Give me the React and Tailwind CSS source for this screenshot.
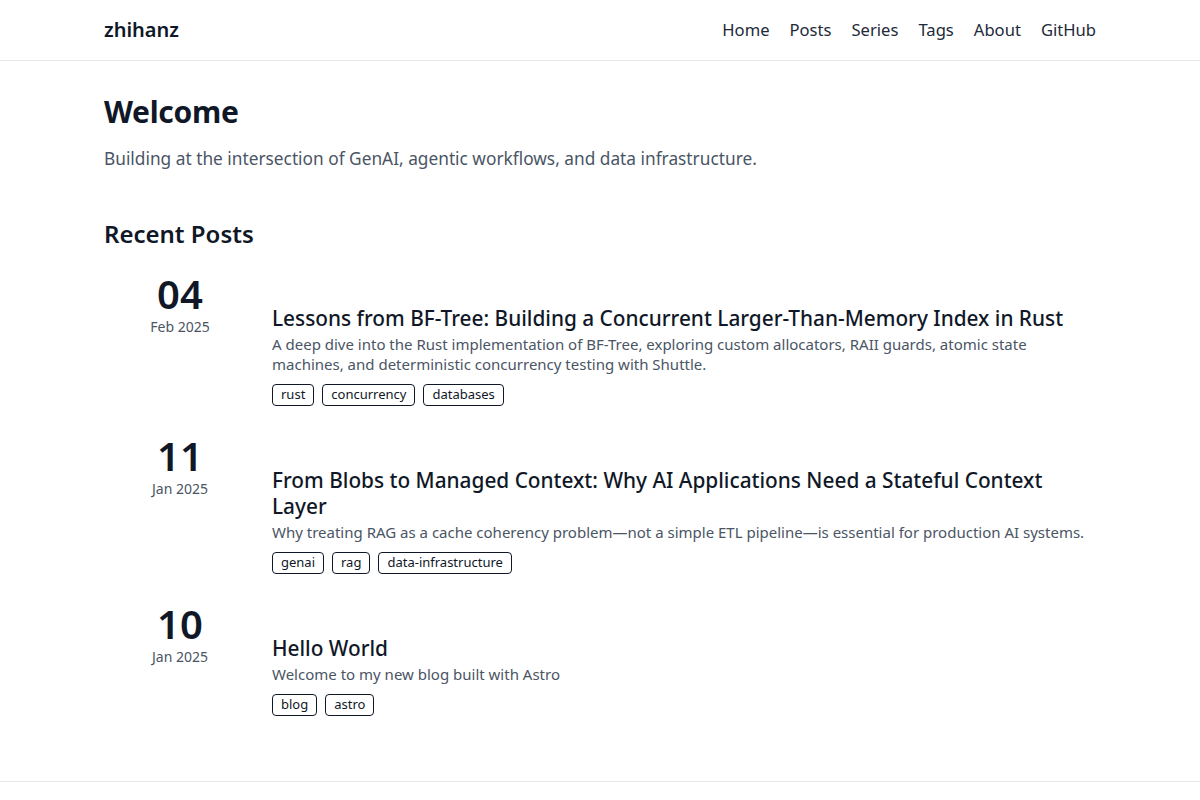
const posts = [
  {
    day: '04',
    month: 'Feb 2025',
    title: 'Lessons from BF-Tree: Building a Concurrent Larger-Than-Memory Index in Rust',
    description:
      'A deep dive into the Rust implementation of BF-Tree, exploring custom allocators, RAII guards, atomic state machines, and deterministic concurrency testing with Shuttle.',
    tags: ['rust', 'concurrency', 'databases'],
  },
  {
    day: '11',
    month: 'Jan 2025',
    title: 'From Blobs to Managed Context: Why AI Applications Need a Stateful Context Layer',
    description:
      'Why treating RAG as a cache coherency problem\u2014not a simple ETL pipeline\u2014is essential for production AI systems.',
    tags: ['genai', 'rag', 'data-infrastructure'],
  },
  {
    day: '10',
    month: 'Jan 2025',
    title: 'Hello World',
    description: 'Welcome to my new blog built with Astro',
    tags: ['blog', 'astro'],
  },
];

const navLinks = ['Home', 'Posts', 'Series', 'Tags', 'About', 'GitHub'];

function PostRow({post}) {
  return (
    <article className="flex gap-4">
      <div className="w-[152px] shrink-0 flex flex-col items-center">
        <div className="h-[40px] flex items-center text-[40px] font-semibold text-gray-900">{post.day}</div>
        <div className="mt-[2px] h-[20px] flex items-center text-[14px] text-gray-600">{post.month}</div>
      </div>
      <div className="flex-1 pt-[31px]">
        <h3 className="text-[20.8px] leading-[26px] font-medium text-gray-900">{post.title}</h3>
        <p className="mt-[3px] text-[15px] leading-[20px] text-gray-600">{post.description}</p>
        <div className="mt-[10px] flex gap-2">
          {post.tags.map(tag => (
            <span key={tag}
                  className="h-[22px] px-2 flex items-center rounded border border-gray-900 text-[13px] text-gray-900">
              {tag}
            </span>
          ))}
        </div>
      </div>
    </article>
  );
}

export default function App() {
  return (
    <div className="min-h-screen bg-white font-['Noto_Sans',sans-serif] text-gray-900">
      <header className="h-[61px] border-b border-gray-200">
        <div className="max-w-5xl mx-auto px-4 h-[60px] flex items-center justify-between">
          <span className="text-[20px] font-semibold">zhihanz</span>
          <nav className="flex gap-5 text-[16.6px] text-gray-800">
            {navLinks.map(link => <a key={link} href="#">{link}</a>)}
          </nav>
        </div>
      </header>

      <main className="max-w-5xl mx-auto px-4 pt-[31px] pb-[65px]">
        <h1 className="text-[30px] leading-[40px] font-bold tracking-[-0.3px]">Welcome</h1>
        <p className="mt-[15px] text-[17.3px] leading-[24px] text-gray-600">
          Building at the intersection of GenAI, agentic workflows, and data infrastructure.
        </p>

        <h2 className="mt-[47px] text-[24px] leading-[32px] font-semibold">Recent Posts</h2>
        <div className="mt-[24px] flex flex-col gap-[30px]">
          {posts.map(post => <PostRow key={post.day + post.month} post={post}/>)}
        </div>
      </main>

      <footer className="h-16 border-t border-gray-200"/>
    </div>
  );
}
